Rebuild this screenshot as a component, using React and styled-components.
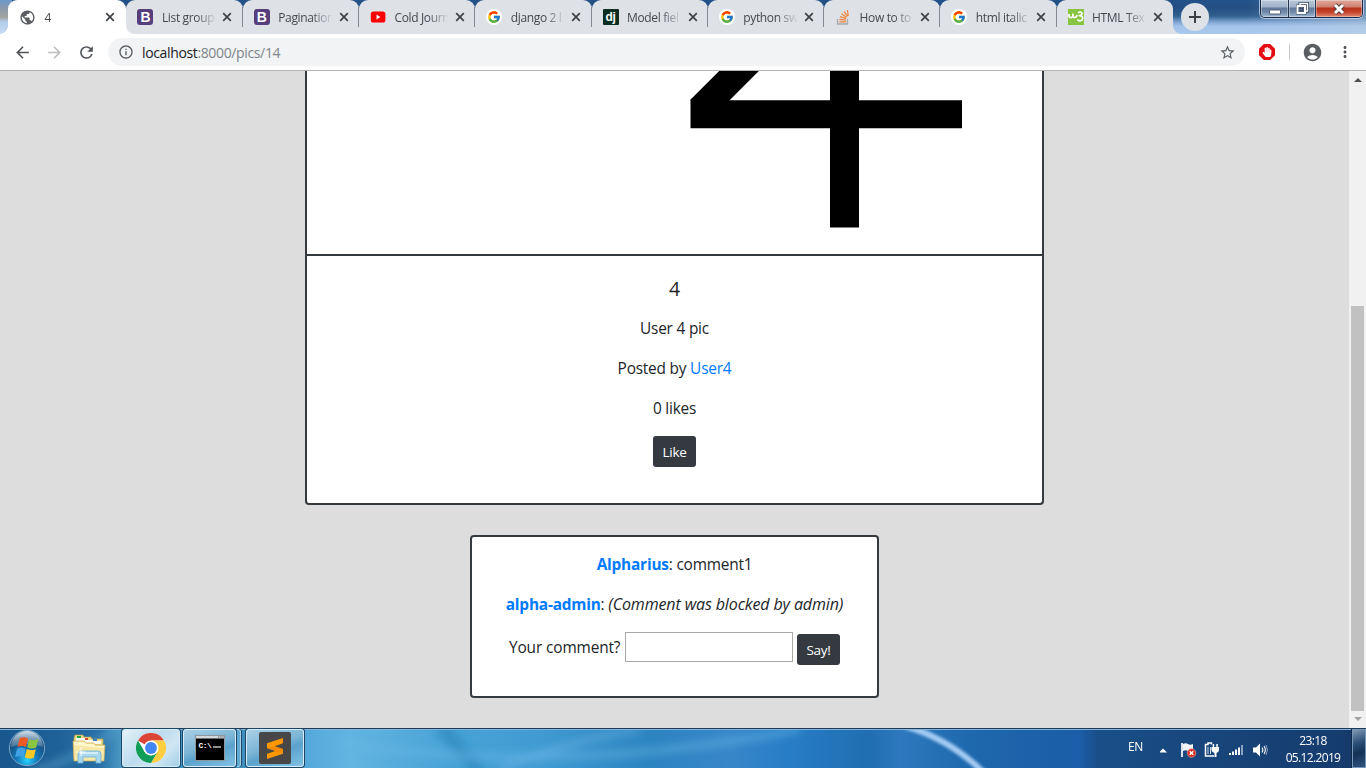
import React from "react";
import styled, { createGlobalStyle, css } from "styled-components";
import { MdPublic, MdArrowBack, MdArrowForward, MdRefresh, MdInfoOutline, MdStarBorder, MdAccountCircle, MdMoreVert } from "react-icons/md";
import { FcGoogle } from "react-icons/fc";
import { FaHandPaper } from "react-icons/fa";

const Global = createGlobalStyle`
  * { box-sizing: border-box; }
  body { margin: 0; overflow: hidden; }
  button, input { font-family: inherit; }
`;

const Screen = styled.div`
  width: 1366px;
  height: 768px;
  display: flex;
  flex-direction: column;
  overflow: hidden;
  font-family: "Open Sans", "Noto Sans", sans-serif;
  color: #212529;
`;

/* ---------- Browser frame ---------- */

const TabStrip = styled.div`
  position: relative;
  height: 34px;
  flex: none;
  display: flex;
  padding-left: 10.2px;
  background:
    linear-gradient(270deg, rgba(190, 208, 228, 0.45) 0, rgba(150, 180, 215, 0) 120px),
    linear-gradient(180deg, #22528a 0, #244f83 8px, #31608f 16px, #7ea4d2 22px, #a3c3ea 26px, #aac9ee 34px);
`;

const StripEdge = styled.div`
  position: absolute;
  left: 0;
  top: 0;
  width: 12px;
  height: 34px;
  background: linear-gradient(180deg, #6c9acb 0, #8c9aa8 9px, #a3a3a0 17px, #b4cdec 22px, #c6daf3 34px);
`;

const TabBox = styled.div`
  position: relative;
  width: 116.28px;
  flex: none;
  height: 34px;
  display: flex;
  align-items: center;
  padding-left: 11px;
  border-radius: 9px 9px 0 0;
  background: #dee1e6;
  ${(p) => p.$active && css`
    background: #fff;
    z-index: 2;
    margin-left: -2px;
    padding-left: 11.8px;
    width: 118.28px;
  `}
  ${(p) => p.$divided && css`
    &::after {
      content: "";
      position: absolute;
      right: 0;
      top: 7px;
      width: 1px;
      height: 20px;
      background: #85898f;
    }
  `}
`;

const Flare = styled.i`
  position: absolute;
  bottom: 0;
  width: 8px;
  height: 8px;
  ${(p) => (p.$side === "left" ? "left: -8px;" : "right: -8px;")}
  background: radial-gradient(circle at ${(p) => (p.$side === "left" ? "0 0" : "100% 0")}, transparent 7.5px, ${(p) => p.$color} 8px);
`;

const Favicon = styled.span`
  width: 16px;
  height: 16px;
  flex: none;
  display: flex;
  align-items: center;
  justify-content: center;
  border-radius: ${(p) => p.$radius || "0"};
  background: ${(p) => p.$bg || "none"};
  color: ${(p) => p.$color || "#fff"};
  font: bold ${(p) => p.$size || "13px"}/16px "Liberation Sans", sans-serif;
  letter-spacing: ${(p) => p.$spacing || "0"};
  svg { flex: none; display: block; }
`;

const TabTitle = styled.span`
  width: 54px;
  flex: none;
  margin-left: 8.5px;
  white-space: nowrap;
  font-size: 12px;
  line-height: 17px;
  letter-spacing: -0.35px;
  color: #45494d;
  mask-image: linear-gradient(90deg, #000 34px, transparent 55px);
`;

const TabClose = styled.svg`
  display: block;
  flex: none;
  width: 10px;
  height: 10px;
  margin-left: 6.5px;
`;

const NewTab = styled.button`
  width: 28px;
  height: 28px;
  margin: 3px 0 0 8px;
  padding: 0;
  border: 0;
  border-radius: 50%;
  background: #dee1e6;
  display: flex;
  align-items: center;
  justify-content: center;
`;

const WindowControls = styled.div`
  position: absolute;
  right: 3px;
  top: 0;
  display: flex;
  width: 103px;
  height: 18px;
  border: 1px solid #182c4a;
  border-top: 0;
  border-radius: 0 0 5px 5px;
  overflow: hidden;
  box-shadow: 0 0 0 1px rgba(205, 222, 242, 0.75);
`;

const WindowButton = styled.span`
  width: ${(p) => p.$w}px;
  height: 17px;
  display: flex;
  align-items: center;
  justify-content: center;
  border-right: ${(p) => (p.$red ? "0" : "1px solid #24364f")};
  box-shadow: inset 0 0 0 1px rgba(255, 255, 255, 0.35);
  background: ${(p) => p.$red
    ? "linear-gradient(180deg, #dfa99c 0, #cf8070 7px, #b5301a 8px, #c5412a 12px, #df8a74 17px)"
    : "linear-gradient(180deg, #b9c8da 0, #9fb2c9 7px, #64799a 8px, #7288a8 12px, #a3bad4 17px)"};
`;

const Toolbar = styled.div`
  height: 37px;
  flex: none;
  display: flex;
  align-items: center;
  background: #fff;
  border-bottom: 1px solid #b2b2b2;
  padding: 0 12px 0 13px;
  color: #5a5e63;
  svg { flex: none; }
`;

const NavIcon = styled.span`
  display: flex;
  flex: none;
  width: 18px;
  height: 18px;
  margin-right: ${(p) => p.$gap}px;
  margin-left: ${(p) => p.$lead || 0}px;
  color: ${(p) => p.$color || "#4f5358"};
`;

const Omnibox = styled.div`
  width: 1137px;
  flex: none;
  height: 28px;
  display: flex;
  align-items: center;
  border-radius: 14px;
  background: #f1f3f4;
  padding: 0 9px 0 10px;
`;

const Url = styled.span`
  flex: 1;
  margin-left: 8px;
  font-size: 14px;
  letter-spacing: -0.36px;
  color: #80858b;
  b { font-weight: 400; color: #202124; }
`;

const Blocker = styled.span`
  display: flex;
  flex: none;
  align-items: center;
  justify-content: center;
  width: 16px;
  height: 16px;
  margin-left: 14px;
  color: #fff;
  background: #e40d15;
  clip-path: polygon(30% 0, 70% 0, 100% 30%, 100% 70%, 70% 100%, 30% 100%, 0 70%, 0 30%);
`;

const ToolDivider = styled.span`
  width: 1px;
  flex: none;
  height: 16px;
  margin: 0 12px 0 14px;
  background: #c9cbce;
`;

/* ---------- Web page ---------- */

const Viewport = styled.div`
  height: 657px;
  flex: none;
  display: flex;
  background: #ddd;
`;

const Page = styled.main`
  width: 1349px;
  display: flex;
  flex-direction: column;
  align-items: center;
  font-size: 16px;
  line-height: 24px;
`;

const Card = styled.section`
  width: 739px;
  height: 434px;
  flex: none;
  border: 2px solid #343a40;
  border-top: 0;
  border-radius: 0 0 4px 4px;
  background: #fff;
`;

const Artwork = styled.svg`
  display: block;
  width: 735px;
  height: 183px;
`;

const CardBody = styled.div`
  border-top: 2px solid #343a40;
  padding: 21px 20px 20px;
  text-align: center;
`;

const Title = styled.h5`
  margin: 0 0 16px;
  font-size: 19.5px;
  line-height: 24px;
  font-weight: 500;
`;

const Paragraph = styled.p`
  height: 24px;
  margin: 0 0 ${(p) => (p.$tight ? 15 : 16)}px;
  font-size: 15.4px;
  letter-spacing: -0.2px;
  white-space: nowrap;
  em { font-size: 16px; line-height: 16px; letter-spacing: -0.12px; }
`;

const Link = styled.a`
  color: #007bff;
  font-weight: ${(p) => (p.$bold ? 700 : 400)};
`;

const DarkButton = styled.button`
  width: 43px;
  height: 31px;
  padding: 1px 0 0;
  border: 0;
  border-radius: 3px;
  background: #343a40;
  color: #fff;
  font-size: 13.5px;
  line-height: 21px;
  letter-spacing: -0.25px;
  font-weight: 500;
`;

const Comments = styled.section`
  width: 409px;
  height: 163px;
  flex: none;
  margin-top: 30px;
  padding-top: 16px;
  border: 2px solid #343a40;
  border-radius: 4px;
  background: #fff;
  text-align: center;
`;

const CommentForm = styled.form`
  display: flex;
  margin-left: 37px;
  align-items: flex-start;
`;

const Label = styled.label`
  width: 116px;
  padding-top: 3px;
  text-align: left;
  font-size: 15.4px;
  letter-spacing: -0.12px;
  white-space: nowrap;
`;

const Field = styled.input`
  width: 168px;
  height: 30px;
  margin: -1px 4px 0 0;
  border: 1px solid #a9a9a9;
  background: #fff;
`;

const ButtonSlot = styled.div`
  padding-top: 1px;
  line-height: 0;
`;

const Scrollbar = styled.div`
  width: 17px;
  display: flex;
  flex-direction: column;
  align-items: center;
  background: #f1f1f1;
`;

const ScrollArrow = styled.i`
  border: 4px solid transparent;
  ${(p) => (p.$down
    ? "border-top: 4px solid #a3a3a3; border-bottom: 0; margin-top: 6px;"
    : "border-bottom: 4px solid #505050; border-top: 0; margin-top: 7px;")}
`;

const ScrollThumb = styled.div`
  width: 13px;
  height: 405px;
  margin-top: 224px;
  background: #c1c1c1;
`;

/* ---------- Taskbar ---------- */

const Taskbar = styled.footer`
  position: relative;
  height: 40px;
  flex: none;
  display: flex;
  align-items: stretch;
  border-top: 1px solid #1e3a58;
  background: linear-gradient(90deg, #18568c 0, #1f6299 60px, #2870a8 100px, #4c9ac4 122px, #3e8dbc 240px, #56aadb 310px, #62b5e0 350px, #48a3d6 450px, #419bd3 540px, #2c84c0 650px, #3887c9 730px, #277dc6 790px, #206eb1 870px, #2d78be 900px, #1e68ad 970px, #1b5da8 1080px, #194f87 1098px, #18467c 1200px, #153a6b 1366px);
`;

const Glow = styled.svg`
  position: absolute;
  left: 0;
  top: 0;
  width: 1366px;
  height: 39px;
`;

const StartButton = styled.svg`
  position: relative;
  width: 38px;
  height: 38px;
  margin: 0 0 0 8px;
`;

const PinnedIcon = styled.svg`
  position: relative;
  width: 36px;
  height: 34px;
  margin: 3px 15px 0 25px;
`;

const TaskButton = styled.div`
  position: relative;
  width: ${(p) => p.$w}px;
  height: 38px;
  margin: 0 ${(p) => p.$gap}px 0 0;
  display: flex;
  align-items: center;
  justify-content: center;
  border: 1px solid #d8edf9;
  border-radius: 3px;
  box-shadow: 0 0 0 1px #1c4665;
  background: ${(p) => (p.$active
    ? "linear-gradient(135deg, #e3f1f8 0, #bcdcee 45%, #cfe6f3 70%, #a4cfe8 100%)"
    : "linear-gradient(160deg, #a9d0e6 0, #79b4d5 45%, #5ba2cc 60%, #82c2e4 100%)")};
`;

const StackEdge = styled.i`
  width: 4px;
  height: 38px;
  margin: 0 5px 0 0;
  border: 1px solid #a8d3ea;
  border-left: 0;
  border-radius: 0 3px 3px 0;
  background: #61a9d0;
  box-shadow: 1px 0 0 #1c4665;
  position: relative;
`;

const Tray = styled.div`
  position: relative;
  margin-left: auto;
  display: flex;
  align-items: center;
  color: #fff;
  font-size: 11.5px;
`;

const Language = styled.span`
  width: 32px;
  margin-top: -5px;
  font-size: 12px;
  letter-spacing: -0.3px;
`;

const TrayIcons = styled.svg`
  display: block;
  width: 110px;
  height: 20px;
  margin-top: 2px;
`;

const Clock = styled.time`
  width: 78px;
  margin: 0 0 0 4px;
  display: flex;
  flex-direction: column;
  align-items: center;
  line-height: 17px;
  font-size: 12px;
  letter-spacing: -0.65px;
  padding-top: 1px;
`;

const ShowDesktop = styled.i`
  width: 14px;
  height: 39px;
  border: 1px solid #7698b8;
  background: linear-gradient(160deg, #8097b0 0, #2d5179 35%, #143156 60%, #2f5580 100%);
  box-shadow: -1px 0 0 #10294a;
`;

const YoutubeIcon = () => (
  <svg width="16" height="16" viewBox="0 0 16 16">
    <rect x="0.8" y="2.6" width="14.6" height="10.9" rx="2.6" fill="#f00" />
    <path d="M6.5 5.6 10.4 8 6.5 10.4Z" fill="#fff" />
  </svg>
);

const StackIcon = () => (
  <svg width="16" height="16" viewBox="0 0 16 16" fill="none">
    <path d="M2.5 10v5h10v-5" stroke="#a8abad" strokeWidth="1.3" />
    <path d="M4.3 12.8h6.6M4.4 10.3l6.5.8M5 7.6l6.1 2.1M6.5 4.8l5.2 3.6M9 2.4l3.6 5M12.3 1l1 5.8" stroke="#f2853b" strokeWidth="1.25" />
  </svg>
);

const W3Icon = () => (
  <svg width="16" height="16" viewBox="0 0 16 16" fill="none" stroke="#fff" strokeWidth="1.7" strokeLinejoin="round">
    <path d="M1 5v1.500c0 2.800 3.700 2.800 3.900 0V5v1.500c.2 2.800 3.600 2.800 4-.6" />
    <path d="M10 3.800c1.300-1.300 4-1 4 .6 0 1.600-1.500 2.200-2.700 2.200 2.300-.1 3.600 1 3.400 2.900-.4 2.800-4.200 3-5.200.8" />
  </svg>
);

const GoogleFavicon = () => (
  <Favicon $bg="#fff" $radius="50%"><FcGoogle size={14} /></Favicon>
);

const BootstrapFavicon = () => (
  <Favicon $bg="#563d7c" $radius="3px" $size="14px">B</Favicon>
);

const tabs = [
  { title: "4", icon: <Favicon $color="#5a5e63"><MdPublic size={17} /></Favicon>, active: true },
  { title: "List group", icon: <BootstrapFavicon /> },
  { title: "Pagination", icon: <BootstrapFavicon /> },
  { title: "Cold Journ", icon: <Favicon><YoutubeIcon /></Favicon> },
  { title: "django 2 l", icon: <GoogleFavicon /> },
  { title: "Model fiel", icon: <Favicon $bg="#0c2e20" $radius="1px" $size="12px" $spacing="-0.3px">dj</Favicon> },
  { title: "python sw", icon: <GoogleFavicon /> },
  { title: "How to to", icon: <Favicon><StackIcon /></Favicon> },
  { title: "html italic", icon: <GoogleFavicon /> },
  { title: "HTML Tex", icon: <Favicon $bg="#87c540"><W3Icon /></Favicon> },
];

function Tab({ title, icon, active, divided, last }) {
  return (
    <TabBox $active={active} $divided={divided}>
      {active && <Flare $side="left" $color="#fff" />}
      {active && <Flare $side="right" $color="#fff" />}
      {last && <Flare $side="right" $color="#dee1e6" />}
      {icon}
      <TabTitle>{title}</TabTitle>
      <TabClose viewBox="0 0 10 10">
        <path d="M1.2 1.2 8.8 8.8M8.8 1.2 1.2 8.8" stroke="#3f4347" strokeWidth="1.7" />
      </TabClose>
    </TabBox>
  );
}

function ChromeLogo() {
  return (
    <svg width="30" height="30" viewBox="0 0 30 30">
      <circle cx="15" cy="15" r="15" fill="#fff" />
      <path d="M15 15 2 7.5A15 15 0 0 1 28 7.5H15Z" fill="#db4437" />
      <path d="M15 7.5H28A15 15 0 0 1 15 30L21.5 18.7Z" fill="#ffcd40" />
      <path d="M2 7.5 8.5 18.8 15 22.5 21.5 18.8 15 30A15 15 0 0 1 2 7.5Z" fill="#0f9d58" />
      <circle cx="15" cy="15" r="7.5" fill="#fff" />
      <circle cx="15" cy="15" r="5.9" fill="#4285f4" />
    </svg>
  );
}

function ConsoleIcon() {
  return (
    <svg width="30" height="26" viewBox="0 0 30 26">
      <rect x="0.5" y="0.5" width="29" height="25" fill="#000" stroke="#8e979e" />
      <rect x="1" y="1" width="28" height="2.5" fill="#d5d9dc" />
      <path d="M23 2h1.3M25.2 2h1.3M27.3 2h1.3" stroke="#555" />
      <text x="3.5" y="12.5" fill="#fff" fontSize="8" fontWeight="700" fontFamily="Liberation Mono, monospace" letterSpacing="-0.6">C:\</text>
      <path d="M18 12h8" stroke="#fff" strokeWidth="1.1" />
    </svg>
  );
}

function SublimeIcon() {
  return (
    <svg width="32" height="32" viewBox="0 0 32 32">
      <rect width="32" height="32" rx="2" fill="#474747" />
      <path d="M8 11.3 24 6v5.3l-8.3 2.9L24 17v4.7L8 27v-5.3l8.4-2.8L8 16.2Z" fill="#ff9800" />
      <path d="m8 16.2 8.4 2.7L24 21.7V17l-8.3-2.8Z" fill="#ed8600" opacity=".65" />
    </svg>
  );
}

function ExplorerIcon() {
  return (
    <PinnedIcon viewBox="0 0 36 34">
      <path d="M3 6 4 3h8l1 2h7l1 2h11v20H3Z" fill="#eed98c" stroke="#b99c48" strokeWidth=".7" />
      <path d="M5 6h10v3H5ZM14 8h9v3h-9ZM22 9h8v3h-8Z" fill="#fffdf0" />
      <path d="M6 4h4v2H6Z" fill="#25a53a" />
      <path d="M14 6h3v2h-3Z" fill="#cf4e34" />
      <path d="M22 7h4v2h-4Z" fill="#3d7dce" />
      <path d="M2 9h11l2 2h8l1 2h10l-1 16H3Z" fill="#f7e8a7" stroke="#c9ab57" strokeWidth=".7" />
      <path d="M3 10h10l2 2h8l1 2h9v2L3 13Z" fill="#fff7cd" />
      <path d="M7 31V22q0-3 3-3h17q3 0 3 3v9h-5v-6H12v6Z" fill="#a9d7ee" stroke="#6eb2d5" strokeWidth=".8" />
      <path d="M9 21h18" stroke="#e4f6fe" strokeWidth="1.4" />
      <path d="M10 15v9M5.5 20h9" stroke="#fff" strokeWidth="1" opacity=".9" />
    </PinnedIcon>
  );
}

function StartOrb() {
  return (
    <StartButton viewBox="0 0 38 38">
      <defs>
        <radialGradient id="orb" cx=".5" cy=".85" r=".85">
          <stop offset="0" stopColor="#25d4ff" />
          <stop offset=".35" stopColor="#1478b8" />
          <stop offset=".75" stopColor="#174c7c" />
          <stop offset="1" stopColor="#5d89ad" />
        </radialGradient>
        <linearGradient id="shine" x1="0" y1="0" x2="0" y2="1">
          <stop offset="0" stopColor="#e5edf2" stopOpacity=".85" />
          <stop offset="1" stopColor="#a7bdcc" stopOpacity=".3" />
        </linearGradient>
      </defs>
      <circle cx="19" cy="19" r="17.6" fill="url(#orb)" stroke="#7da8c8" strokeWidth="1" />
      <path d="M3 18A16 16 0 0 1 35 18Q19 12 3 18Z" fill="url(#shine)" />
      <path d="M11.5 9.5q4-2.500 8.500 0l-2 8.500q-4.500-2-8.500 0Z" fill="#ef5a24" />
      <path d="M21.200 10.200q4 2 9-.2l-2 8.500q-4.500 2.200-9-.2Z" fill="#8cc63e" />
      <path d="M9 19.500q4-2 8.500.2l-2 8.500q-4.500-2-8.500 0Z" fill="#3fa1e2" />
      <path d="M18.800 20q4.500 2.200 9 .2l-2 8.500q-4.500 2-9-.4Z" fill="#fdc726" />
    </StartButton>
  );
}

function TrayIconSet() {
  return (
    <TrayIcons viewBox="0 0 110 20">
      <path d="M-1 12.500 3 8.500 7 12.500Z" fill="#fff" />
      <path d="M22 3v14" stroke="#fff" strokeWidth="1.700" />
      <path d="M23 4q3-1.500 5 0t5 0v7q-3 1.500-5 0t-5 0Z" fill="#f2f5f8" />
      <circle cx="31.500" cy="13" r="4.300" fill="#d92b20" stroke="#f1b4ac" strokeWidth=".6" />
      <path d="m29.700 11.200 3.600 3.600m0-3.600-3.600 3.600" stroke="#fff" strokeWidth="1.400" />
      <path d="M51.500 4.500V3H48v1.500h-2.500V16H54" stroke="#fff" strokeWidth="1.500" fill="none" />
      <path d="M48 7v7M50.500 7v7" stroke="#fff" strokeWidth="1" opacity=".8" />
      <path d="M51.500 7h7.500v3q0 2-2.500 3v4h-2v-4Q51.500 12 51.500 10ZM52.700 4h1.500v3h-1.500ZM56.300 4h1.500v3h-1.500Z" fill="#fff" />
      <path d="M69 13h2v2h-2ZM72 11.500h2V15h-2ZM75 9.500h2V15h-2ZM78 7.500h2V15h-2Z" fill="#fff" />
      <path d="M81 5h2v10h-2Z" fill="#8ba3bf" />
      <path d="M93 7.500h3l4-4v13l-4-4h-3Z" fill="#fff" />
      <path d="M102 7.500q1.700 2.500 0 5M104 6q2.700 4 0 8" stroke="#fff" fill="none" strokeWidth="1.100" />
      <path d="M106 5q3 5 0 10" stroke="#fff" fill="none" opacity=".5" />
    </TrayIcons>
  );
}

export default function App() {
  return (
    <Screen>
      <Global />
      <TabStrip>
        <StripEdge />
        {tabs.map((t, i) => (
          <Tab key={t.title} {...t} divided={i > 0 && i < tabs.length - 1} last={i === tabs.length - 1} />
        ))}
        <NewTab aria-label="New tab">
          <svg width="12" height="12" viewBox="0 0 12 12"><path d="M6 0v12M0 6h12" stroke="#3c4043" strokeWidth="2" /></svg>
        </NewTab>
        <WindowControls>
          <WindowButton $w={28}>
            <svg width="12" height="15" viewBox="0 0 12 15"><rect x=".5" y="9" width="11" height="4" rx=".5" fill="#fff" stroke="#46566d" strokeWidth=".9" /></svg>
          </WindowButton>
          <WindowButton $w={27}>
            <svg width="13" height="13" viewBox="0 0 13 13" fill="none">
              <path d="M4 3.500V1.500h7.500V9h-2" stroke="#39495f" strokeWidth="3" />
              <rect x="1.500" y="4" width="7.500" height="7" stroke="#39495f" strokeWidth="3" />
              <path d="M4 3.500V1.500h7.500V9h-2" stroke="#fff" strokeWidth="1.400" />
              <rect x="1.500" y="4" width="7.500" height="7" stroke="#fff" strokeWidth="2" />
              <rect x="4" y="6.300" width="2.500" height="2.500" stroke="#39495f" />
            </svg>
          </WindowButton>
          <WindowButton $w={46} $red>
            <svg width="14" height="12" viewBox="0 0 14 12">
              <path d="m3 2 8 8m0-8-8 8" stroke="#593c40" strokeWidth="4.800" />
              <path d="m3 2 8 8m0-8-8 8" stroke="#fff" strokeWidth="3" />
            </svg>
          </WindowButton>
        </WindowControls>
      </TabStrip>
      <Toolbar>
        <NavIcon $gap={14}><MdArrowBack size={19} /></NavIcon>
        <NavIcon $gap={14} $color="#bbbdbf"><MdArrowForward size={19} /></NavIcon>
        <NavIcon $gap={13}><MdRefresh size={19} /></NavIcon>
        <Omnibox>
          <MdInfoOutline size={16} />
          <Url><b>localhost</b>:8000/pics/14</Url>
          <MdStarBorder size={17} />
        </Omnibox>
        <Blocker><FaHandPaper size={10} /></Blocker>
        <ToolDivider />
        <MdAccountCircle size={21} />
        <NavIcon $gap={0} $lead={13}><MdMoreVert size={18} /></NavIcon>
      </Toolbar>
      <Viewport>
        <Page>
          <Card>
            <Artwork viewBox="0 0 735 183" stroke="#000" strokeWidth="28">
              <line x1="393" y1="39" x2="453" y2="-21" />
              <line x1="383.500" y1="43.300" x2="655" y2="43.300" />
              <line x1="537.500" y1="-10" x2="537.500" y2="156.500" strokeWidth="29" />
            </Artwork>
            <CardBody>
              <Title>4</Title>
              <Paragraph>User 4 pic</Paragraph>
              <Paragraph>Posted by <Link>User4</Link></Paragraph>
              <Paragraph $tight>0 likes</Paragraph>
              <DarkButton>Like</DarkButton>
            </CardBody>
          </Card>
          <Comments>
            <Paragraph><Link $bold>Alpharius</Link>: comment1</Paragraph>
            <Paragraph><Link $bold>alpha-admin</Link>: <em>(Comment was blocked by admin)</em></Paragraph>
            <CommentForm>
              <Label>Your comment?</Label>
              <Field aria-label="Your comment" />
              <ButtonSlot><DarkButton type="button">Say!</DarkButton></ButtonSlot>
            </CommentForm>
          </Comments>
        </Page>
        <Scrollbar>
          <ScrollArrow />
          <ScrollThumb />
          <ScrollArrow $down />
        </Scrollbar>
      </Viewport>
      <Taskbar>
        <Glow viewBox="0 0 1366 39" fill="none">
          <defs>
            <filter id="soft" x="-20%" y="-50%" width="140%" height="200%"><feGaussianBlur stdDeviation="1.500" /></filter>
            <filter id="softer" x="-20%" y="-50%" width="140%" height="200%"><feGaussianBlur stdDeviation="4" /></filter>
          </defs>
          <g filter="url(#softer)">
            <path d="M30 44Q80 30 120-4" stroke="#5aa6ca" strokeWidth="8" opacity=".5" />
            <path d="M440-4 480 44" stroke="#2280b4" strokeWidth="14" opacity=".5" />
            <path d="M340 14Q560 48 800 0" stroke="#6ab8e6" strokeWidth="7" opacity=".5" />
            <path d="M500 40Q560 14 640 0" stroke="#7cc0ea" strokeWidth="5" opacity=".5" />
          </g>
          <path d="M905-3Q950 10 984 44" stroke="#a4ccf4" strokeWidth="6" filter="url(#soft)" />
          <path d="M0 .5h1366" stroke="#84b5dc" />
        </Glow>
        <StartOrb />
        <ExplorerIcon />
        <TaskButton $w={58} $gap={3} $active><ChromeLogo /></TaskButton>
        <TaskButton $w={53} $gap={1}><ConsoleIcon /></TaskButton>
        <StackEdge />
        <TaskButton $w={58} $gap={0}><SublimeIcon /></TaskButton>
        <Tray>
          <Language>EN</Language>
          <TrayIconSet />
          <Clock><span>23:18</span><span>05.12.2019</span></Clock>
          <ShowDesktop />
        </Tray>
      </Taskbar>
    </Screen>
  );
}
